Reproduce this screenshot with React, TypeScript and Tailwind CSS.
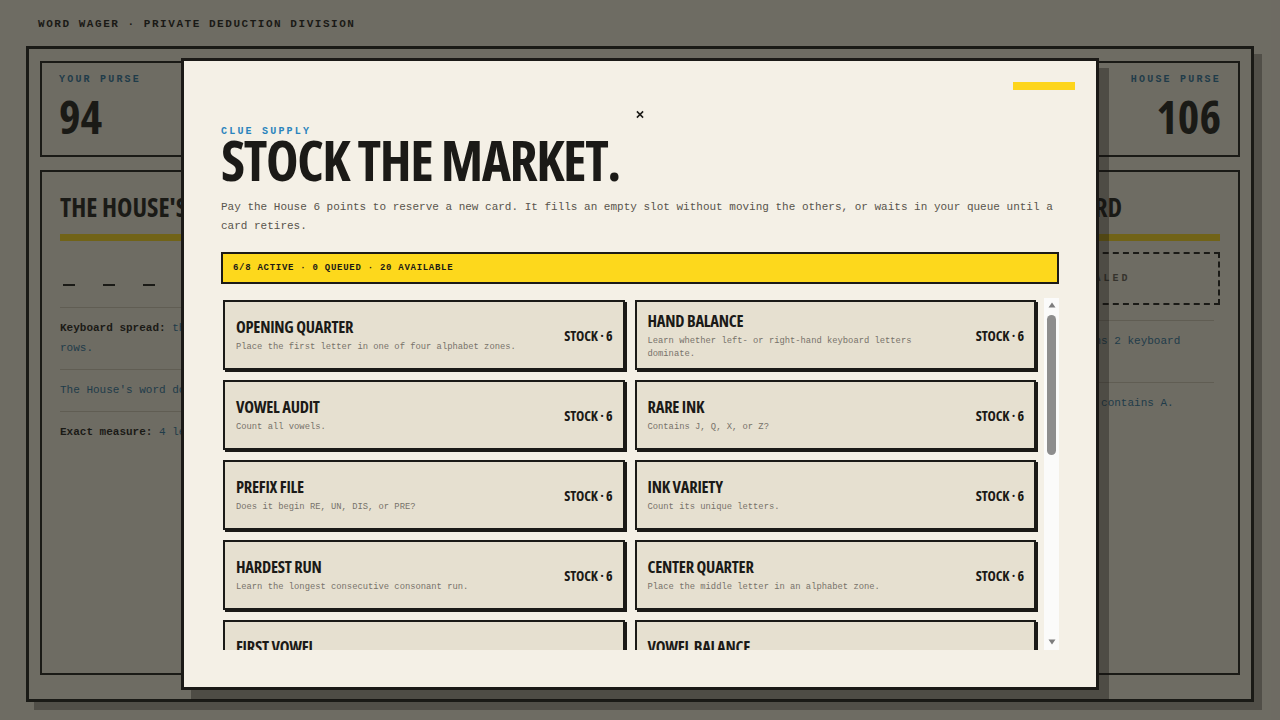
import React from 'react';

const MONO = "font-['Liberation_Mono','DejaVu_Sans_Mono',monospace]";
const COND = "font-['Open_Sans',sans-serif] [font-stretch:75%]";

interface Clue {
  name: string;
  blurb: string;
}

const CLUES: Clue[] = [
  { name: 'OPENING QUARTER', blurb: 'Place the first letter in one of four alphabet zones.' },
  { name: 'HAND BALANCE', blurb: 'Learn whether left- or right-hand keyboard letters dominate.' },
  { name: 'VOWEL AUDIT', blurb: 'Count all vowels.' },
  { name: 'RARE INK', blurb: 'Contains J, Q, X, or Z?' },
  { name: 'PREFIX FILE', blurb: 'Does it begin RE, UN, DIS, or PRE?' },
  { name: 'INK VARIETY', blurb: 'Count its unique letters.' },
  { name: 'HARDEST RUN', blurb: 'Learn the longest consecutive consonant run.' },
  { name: 'CENTER QUARTER', blurb: 'Place the middle letter in an alphabet zone.' },
  { name: 'FIRST VOWEL', blurb: 'Reveal the position of the first vowel.' },
  { name: 'VOWEL BALANCE', blurb: 'More vowels in the first half or the second?' },
  { name: 'CLOSING QUARTER', blurb: 'Place the last letter in one of four alphabet zones.' },
  { name: 'DOUBLE TAP', blurb: 'Does any letter appear twice in a row?' },
  { name: 'SUFFIX FILE', blurb: 'Does it end ED, ING, ER, or LY?' },
  { name: 'ROW COUNT', blurb: 'How many keyboard rows does it touch?' },
  { name: 'ECHO LETTER', blurb: 'Does any letter repeat anywhere?' },
  { name: 'LAST VOWEL', blurb: 'Reveal the position of the last vowel.' },
  { name: 'ALPHA ORDER', blurb: 'Are the letters in alphabetical order?' },
  { name: 'HOME ROW', blurb: 'Count letters from the home row.' },
  { name: 'SPLIT HALF', blurb: 'Compare the first and second halves.' },
  { name: 'Y FACTOR', blurb: 'Does it contain the letter Y?' },
];

function PurseBox({ label, value, right }: { label: string; value: number; right?: boolean }) {
  return (
    <div className={`w-[200px] h-[96px] border-2 border-[#1b1a17] px-[17px] pt-[11px] ${right ? 'text-right' : ''}`}>
      <div className={`${MONO} text-[10px] leading-[12px] font-bold tracking-[0.22em] text-[#2a6f97]`}>{label}</div>
      <div className={`${COND} text-[46px] font-bold leading-[46px] mt-[7px] text-[#1b1a17]`}>{value}</div>
    </div>
  );
}

function ClueCard({ clue }: { clue: Clue }) {
  return (
    <div className="mr-[2px] h-[70px] border-2 border-[#1b1a17] bg-[#e6e0d0] shadow-[2px_2px_0_#1b1a17] pl-[11px] pr-[10px] flex items-center gap-6">
      <div className="flex-1 min-w-0">
        <div className={`${COND} text-[16.5px] font-bold leading-[22px] tracking-[-0.015em] text-[#1b1a17]`}>{clue.name}</div>
        <div className={`${MONO} text-[8.8px] leading-[13px] mt-[3px] text-[#77726a]`}>{clue.blurb}</div>
      </div>
      <div className={`${COND} shrink-0 text-[14px] font-bold tracking-[-0.01em] text-[#1b1a17]`}>STOCK · 6</div>
    </div>
  );
}

// drawn scroll track beside the clue list
function ScrollTrack() {
  return (
    <div className="w-[15px] shrink-0 bg-[#fbfbfa] flex flex-col items-center">
      <svg width="8" height="6" viewBox="0 0 8 6" className="mt-[4px] text-[#7d7d7d]">
        <path d="M4 0.5 L7.5 5.5 L0.5 5.5 Z" fill="currentColor" />
      </svg>
      <div className="mt-[7px] w-[9px] h-[140px] rounded-full bg-[#8d8d8d]" />
      <div className="flex-1" />
      <svg width="8" height="6" viewBox="0 0 8 6" className="mb-[5px] text-[#7d7d7d]">
        <path d="M0.5 0.5 L7.5 0.5 L4 5.5 Z" fill="currentColor" />
      </svg>
    </div>
  );
}

export default function App() {
  return (
    <div className="relative w-[1280px] h-[720px] overflow-hidden bg-[#ebe5d7] text-[#1b1a17]">
      {/* board underneath the dialog */}
      <div className={`${MONO} px-[38px] pt-[18px] text-[11px] leading-[12px] font-bold tracking-[0.14em]`}>
        WORD WAGER · PRIVATE DEDUCTION DIVISION
      </div>
      <div className="mx-[26px] mt-[16px] h-[656px] border-[3px] border-[#1b1a17] shadow-[8px_8px_0_rgba(27,26,23,0.35)] px-[11px] pt-[12px]">
        <div className="flex justify-between">
          <PurseBox label="YOUR PURSE" value={94} />
          <PurseBox label="HOUSE PURSE" value={106} right />
        </div>
        <div className="mt-[13px] grid grid-cols-[390px_1fr_390px] gap-6 h-[505px]">
          <div className="border-2 border-[#1b1a17] px-[18px] pt-[18px]">
            <div className={`${COND} text-[26px] font-bold leading-[34px]`}>THE HOUSE'S WORD</div>
            <div className="mt-[10px] h-[7px] bg-[#f2cf1c]" />
            <div className="flex gap-[28px] pl-[3px] mt-[25px] h-[20px]">
              {[0, 1, 2, 3].map((i) => (
                <div key={i} className="w-[12px] border-b-2 border-[#1b1a17]" />
              ))}
            </div>
            <div className={`${MONO} text-[11px] leading-[20px] mt-[21px]`}>
              <div className="border-t border-[#c9c1b0] pt-[10px] pb-[11px]">
                <span className="font-bold">Keyboard spread:</span>{' '}
                <span className="text-[#2a6f97]">the House's word spans 3 keyboard rows.</span>
              </div>
              <div className="border-t border-[#c9c1b0] pt-[10px] pb-[11px] text-[#2a6f97]">
                The House's word does not contain E.
              </div>
              <div className="border-t border-[#c9c1b0] pt-[10px] pb-[11px]">
                <span className="font-bold">Exact measure:</span> <span className="text-[#2a6f97]">4 letters.</span>
              </div>
            </div>
          </div>
          <div className="border-2 border-[#1b1a17] px-[18px] pt-[18px]">
            <div className={`${COND} text-[26px] font-bold leading-[34px]`}>THE LEDGER</div>
            <div className="mt-[10px] h-[7px] bg-[#f2cf1c]" />
          </div>
          <div className="border-2 border-[#1b1a17] px-[18px] pt-[18px]">
            <div className={`${COND} text-[26px] font-bold leading-[34px]`}>YOUR SECRET ON RECORD</div>
            <div className="mt-[10px] h-[7px] bg-[#f2cf1c]" />
            <div className={`${MONO} mt-[11px] h-[53px] border-2 border-dashed border-[#1b1a17] flex items-center justify-center text-[10px] font-bold tracking-[0.3em] text-[#5d5950]`}>
              YOUR WORD IS SEALED
            </div>
            <div className={`${MONO} text-[11px] leading-[20px] mt-[15px] pr-[6px] text-[#2a6f97]`}>
              <div className="border-t border-[#c9c1b0] pt-[10px] pb-[11px] pr-[8px]">Keyboard spread: your own word spans 2 keyboard rows.</div>
              <div className="border-t border-[#c9c1b0] pt-[10px] pb-[11px] pr-[8px]">Letter check: your own hidden word contains A.</div>
            </div>
          </div>
        </div>
      </div>

      {/* dim backdrop */}
      <div className="absolute inset-0 bg-[#1b1a16]/60" />

      {/* clue supply dialog */}
      <div className="absolute left-[181px] top-[58px] w-[918px] h-[632px] border-[3px] border-[#1b1a17] bg-[#f4f0e6] shadow-[10px_10px_0_rgba(20,18,14,0.35)] px-[37px] pt-[65px]">
        <div className="absolute right-[21px] top-[21px] w-[62px] h-[8px] bg-[#fdd51c]" />
        <button className="absolute left-[452px] top-[49px] w-[8px] h-[8px] flex items-center justify-center text-[#1b1a17]">
          <svg width="9" height="9" viewBox="0 0 9 9">
            <path d="M1 1 L8 8 M8 1 L1 8" stroke="currentColor" strokeWidth="1.7" />
          </svg>
        </button>

        <div className={`${MONO} text-[10px] leading-[12px] font-bold tracking-[0.22em] text-[#2a84bd]`}>CLUE SUPPLY</div>
        <h1 className={`${COND} text-[55px] leading-[44px] font-bold tracking-[-0.025em] text-[#1b1a17]`}>STOCK THE MARKET.</h1>
        <p className={`${MONO} mt-[16px] text-[11px] leading-[19px] text-[#58544c]`}>
          Pay the House 6 points to reserve a new card. It fills an empty slot without moving the others, or waits in your queue until a card retires.
        </p>

        <div className={`${MONO} mt-[16px] h-[32px] border-2 border-[#1b1a17] bg-[#fdd81c] flex items-center px-[10px] pt-[2px] text-[9px] font-bold tracking-[0.08em]`}>
          6/8 ACTIVE · 0 QUEUED · 20 AVAILABLE
        </div>

        <div className="mt-[14px] h-[352px] flex">
          <div className="flex-1 overflow-y-auto [scrollbar-width:none] pl-[2px] pr-[6px] pt-[2px]">
            <div className="grid grid-cols-2 gap-x-[8px] gap-y-[10px] pb-[4px]">
              {CLUES.map((clue) => (
                <ClueCard key={clue.name} clue={clue} />
              ))}
            </div>
          </div>
          <ScrollTrack />
        </div>
      </div>
    </div>
  );
}
